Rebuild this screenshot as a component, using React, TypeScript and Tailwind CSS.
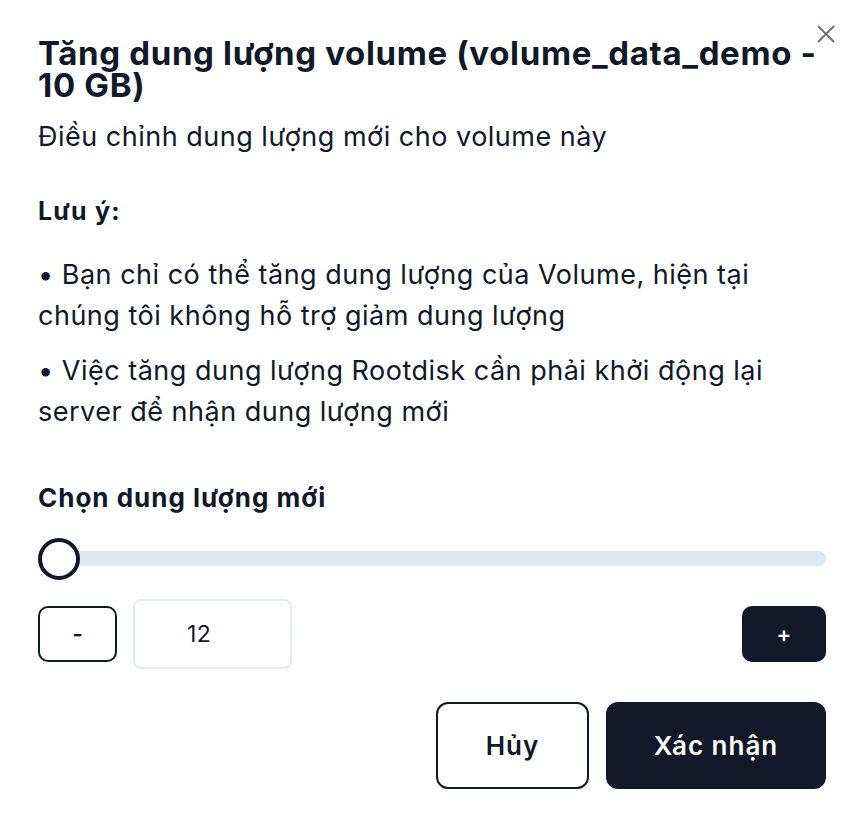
import React, { useState } from 'react';

const App: React.FC = () => {
  const [size, setSize] = useState(12);

  return (
    <div className="relative min-h-[816px] w-[856px] bg-white pl-[38px] pr-[30px] pt-[37px] text-[#111827]" style={{ fontFamily: 'Inter, "Noto Sans", sans-serif' }}>
      <button className="absolute right-[21px] top-[25px] text-[#6b7280]" aria-label="Close">
        <svg width="18" height="18" viewBox="0 0 18 18" fill="none" stroke="currentColor" strokeWidth="2" strokeLinecap="round">
          <path d="M1.5 1.5l15 15M16.5 1.5l-15 15" />
        </svg>
      </button>

      <h1 className="text-[33px] font-bold leading-[32px] tracking-[0.65px]">
        Tăng dung lượng volume (volume_data_demo - 10 GB)
      </h1>
      <p className="mt-[18px] text-[27px] leading-[36px] tracking-[0.5px]">Điều chỉnh dung lượng mới cho volume này</p>

      <div className="mt-[40px]">
        <p className="text-[25px] font-bold leading-[32px] tracking-[1.2px]">Lưu ý:</p>
        <div className="mt-[27px] space-y-[14px] text-[27px] leading-[41px] tracking-[0.5px]">
          <p>• Bạn chỉ có thể tăng dung lượng của Volume, hiện tại chúng tôi không hỗ trợ giảm dung lượng</p>
          <p>• Việc tăng dung lượng Rootdisk cần phải khởi động lại server để nhận dung lượng mới</p>
        </div>
      </div>

      <div className="mt-[49px]">
        <p className="text-[26px] font-bold leading-[34px] tracking-[1px]">Chọn dung lượng mới</p>
        <div className="relative mt-[23px] flex h-[40px] items-center">
          <div className="h-[15px] w-full rounded-full bg-[#e2e8f0]" />
          <div className="absolute left-0 top-0 h-[42px] w-[42px] rounded-full border-[4px] border-[#111827] bg-white" />
        </div>

        <div className="mt-[21px] flex items-center">
          <button
            onClick={() => setSize(s => Math.max(10, s - 1))}
            className="flex h-[56px] w-[79px] items-center justify-center rounded-[10px] border-2 border-[#111827] text-[22px] font-semibold"
          >
            -
          </button>
          <div className="ml-[16px] flex h-[70px] w-[159px] items-center rounded-[8px] border-2 border-[#e5e9f0] pl-[52px] text-[23px] tracking-[0.4px]">
            {size}
          </div>
          <button
            onClick={() => setSize(s => s + 1)}
            className="ml-auto flex h-[56px] w-[84px] items-center justify-center rounded-[10px] bg-[#111827] text-[22px] font-semibold text-white"
          >
            +
          </button>
        </div>
      </div>

      <div className="mt-[33px] flex justify-end gap-[17px]">
        <button className="h-[87px] w-[153px] rounded-[12px] border-2 border-[#111827] text-[26px] font-semibold tracking-[1px]">Hủy</button>
        <button className="h-[87px] w-[220px] rounded-[12px] bg-[#111827] text-[26px] font-semibold tracking-[1px] text-white">Xác nhận</button>
      </div>
    </div>
  );
};

export default App;
